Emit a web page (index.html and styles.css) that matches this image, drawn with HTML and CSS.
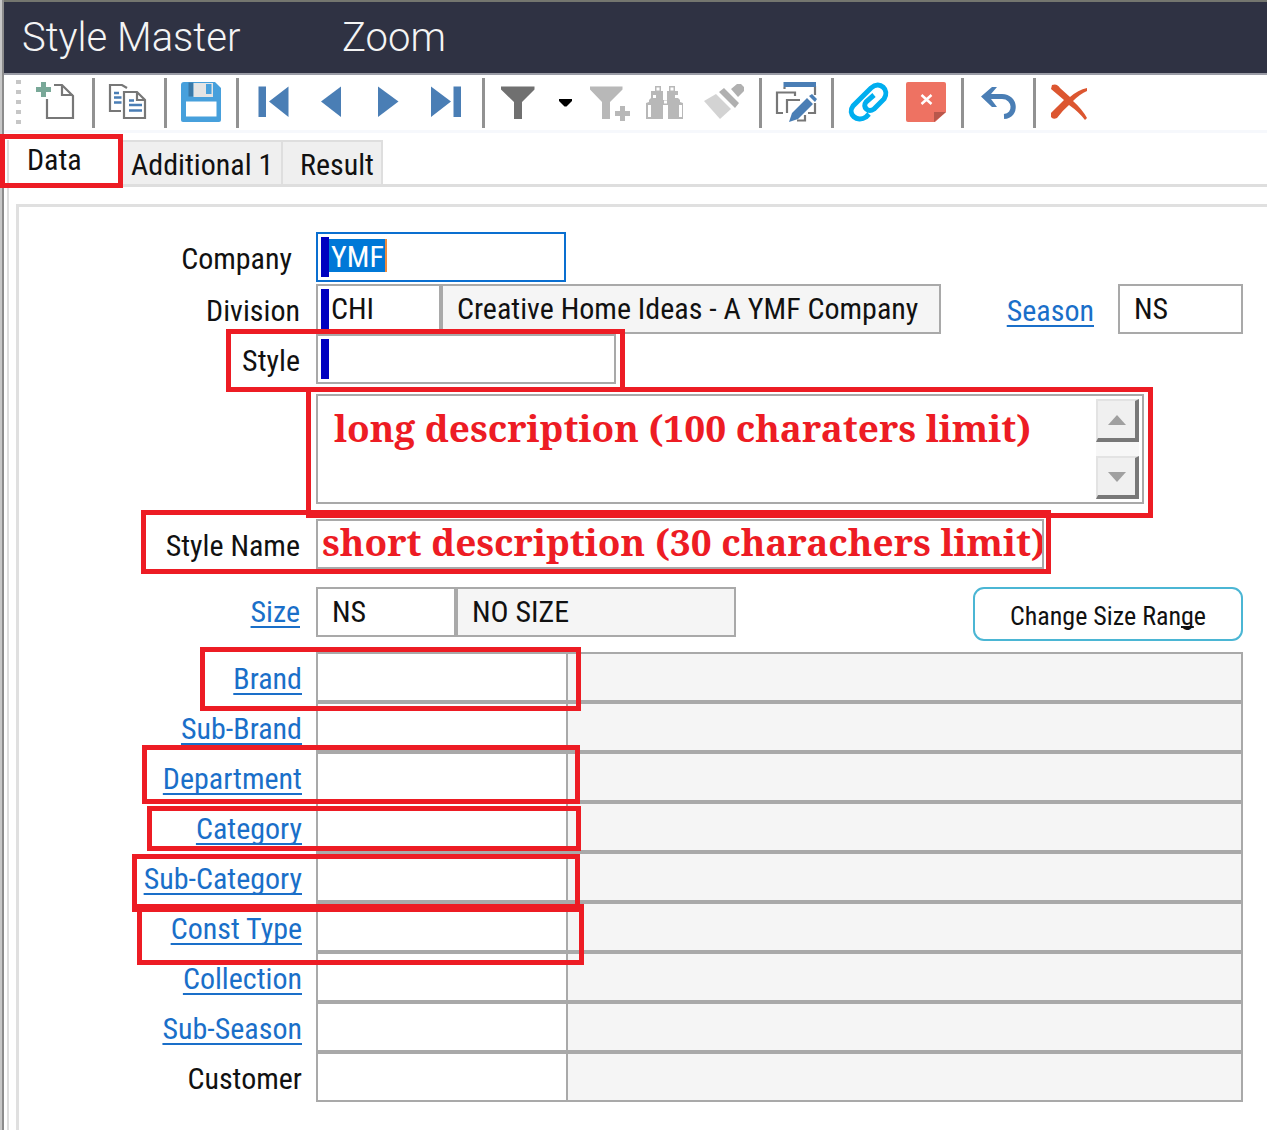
FILE: index.html
```html
<!DOCTYPE html>
<html lang="en">
<head>
<meta charset="utf-8">
<title>Style Master</title>
<link rel="stylesheet" href="styles.css">
</head>
<body>
<header class="titlebar">
  <h1 class="title">Style Master</h1>
  <span class="mode">Zoom</span>
</header>

<div class="toolbar" role="toolbar" aria-label="Record tools">
  <span class="grip"><i></i><i></i><i></i><i></i><i></i></span>
  <button class="tool" aria-label="New"><svg viewBox="0 0 40 40"><path d="M17 3H25L36 14V36H10V17M25 3V13H36" fill="none" stroke="#777" stroke-width="2.2"/><path d="M4 0h5v5h5v5H9v5H4v-5h-5V5h5z" fill="#79a898"/></svg></button>
  <span class="sep"></span>
  <button class="tool" aria-label="Copy"><svg viewBox="0 0 40 40"><path d="M12 29H1V3H13L18 6M15 10H28L36 18V36H15ZM28 10V18H36" fill="none" stroke="#777" stroke-width="2.2"/><path d="M5 11h5M5 15.500h7.500M5 20.500h7.500M20 18.500h5M20 23h13M20 28.500h13" stroke="#4a7eb5" stroke-width="2.4"/></svg></button>
  <span class="sep"></span>
  <button class="tool" aria-label="Save"><svg viewBox="0 0 40 40"><path d="M3 0H34L40 6V38Q40 40 38 40H2Q0 40 0 38V3Q0 0 3 0Z" fill="#47a0dc"/><path d="M7.500 .5h5v14h-5z" fill="#3878a8"/><path d="M12.500 1H32V15H12.500Z" fill="#e4e4e4"/><path d="M25 2h5.500v10H25z" fill="#47a0dc"/><path d="M5 19.500h30.500v15H5z" fill="#fff"/></svg></button>
  <span class="sep"></span>
  <button class="tool" aria-label="First"><svg viewBox="0 0 40 40" fill="#4a7eb5"><path d="M5.500 4.500h7.500V35H5.500zM35.500 4.500V35L16 19.500z"/></svg></button>
  <button class="tool" aria-label="Previous"><svg viewBox="0 0 40 40" fill="#4a7eb5"><path d="M30 4.500V35L10 19.500z"/></svg></button>
  <button class="tool" aria-label="Next"><svg viewBox="0 0 40 40" fill="#4a7eb5"><path d="M9 4.500V35L29.500 19.500z"/></svg></button>
  <button class="tool" aria-label="Last"><svg viewBox="0 0 40 40" fill="#4a7eb5"><path d="M4 4.500V35L24 19.500zM26.500 4.500H34V35h-7.500z"/></svg></button>
  <span class="sep"></span>
  <button class="tool" aria-label="Filter"><svg viewBox="0 0 40 40" fill="#707070"><path d="M2 4.500H35.500V7.500L23 20V37H15V20L2 7.500z"/></svg></button>
  <button class="tool tool-drop" aria-label="Filter options"><svg viewBox="0 0 14 40"><path d="M0 17H13V19L7.500 24.500H5.500L0 19z"/></svg></button>
  <button class="tool tool-plus" aria-label="Add filter"><svg viewBox="0 0 40 40" fill="#b8b8b8"><path d="M-1 4.500H31.500V7.500L19 20V37H11V20L-1 7.500zM29 24h5v5h5v5h-5v5h-5v-5h-5v-5h5z"/></svg></button>
  <button class="tool" aria-label="Find"><svg viewBox="0 0 40 40" fill="#b8b8b8"><path d="M9 4h6v5h2v9h4V9h2V4h6v5h3v7l2 2v2l3 1v16H22V23h-5v14H0V21l3-1v-2l2-2V9h4z"/><path d="M10.500 5.500h3v3h-3zM24.500 5.500h3v3h-3zM7 13h3v3H7zM29 13h3v3h-3zM18 18.500h3v3h-3zM2 23h3v12H2zM33 23h3v12h-3z" fill="#fff"/></svg></button>
  <button class="tool" aria-label="Format"><svg viewBox="0 0 40 40"><path d="M0 19L12 12L27 27L16 37Z" fill="#d3d3d3"/><path d="M15 10L20 6L35 21L31 26ZM27 7L33 2H37L40 5V9L34 15Z" fill="#b0b0b0"/></svg></button>
  <span class="sep"></span>
  <button class="tool" aria-label="Edit layout"><svg viewBox="0 0 40 40"><path d="M19 14V10.500H1V31H7M24 18H11V31M21 38.500H29V33M32 31H39V21M8.500 5V7M39 4V13" fill="none" stroke="#777" stroke-width="2.200"/><path d="M7.500 0H40V5H7.500zM13 40L16 31L31 16L37 22L22 37ZM33 14L36 12L41 17L39 20Z" fill="#4a7eb5"/></svg></button>
  <span class="sep"></span>
  <button class="tool" aria-label="Attachments"><svg viewBox="0 0 40 40"><path d="M21 32L18 35C9 41-1 32 5 24L23 6C32-2 42 8 36 17L26 27C20 31 14 25 18 20L26 13" fill="none" stroke="#00aeef" stroke-width="5"/></svg></button>
  <button class="tool" aria-label="Notes"><svg viewBox="0 0 40 40"><path d="M2 0H38Q40 0 40 2V30L29 40H2Q0 40 0 38V2Q0 0 2 0Z" fill="#ee7262"/><path d="M28 40V30H40Z" fill="#b8574b"/><path d="M15.500 13L25.500 22M25.500 13L15.500 22" stroke="#fff" stroke-width="2.500"/></svg></button>
  <span class="sep"></span>
  <button class="tool" aria-label="Undo"><svg viewBox="0 0 40 40"><path d="M8 14.500H24C38 14.500 39 34 26 34.500" fill="none" stroke="#4a7eb5" stroke-width="5.200"/><path d="M3 14.500L14 5H19L13 12V17L19 25H14Z" fill="#4a7eb5"/></svg></button>
  <span class="sep"></span>
  <button class="tool" aria-label="Delete"><svg viewBox="0 0 40 40" fill="#dc5630"><path d="M2 3Q7 1 10 6L20 15Q28 8 37 6V9Q30 12 23 19Q32 27 37 36L35 38Q29 30 19 23Q12 29 7 36Q3 38 1 35V31Q8 24 14 18Q7 12 1 7Z"/></svg></button>
</div>

<main class="workspace">
  <div class="tabs" role="tablist">
    <button class="tab tab-active" role="tab" aria-selected="true">Data</button>
    <button class="tab tab-additional" role="tab" aria-selected="false">Additional 1</button>
    <button class="tab tab-result" role="tab" aria-selected="false">Result</button>
    <span class="mark mark-data"></span>
  </div>

  <form class="panel">
    <div class="row row-company">
      <label class="label label-company" for="company">Company</label>
      <div class="field field-company required focused"><input class="selected" id="company" value="YMF"></div>
    </div>
    <div class="row row-division">
      <label class="label" for="division">Division</label>
      <div class="field field-division required"><input id="division" value="CHI"></div>
      <input class="box readonly division-name" aria-label="Division name" readonly value="Creative Home Ideas - A YMF Company">
      <a class="link season-link" id="season-label" href="#season">Season</a>
      <input class="box season" id="season" aria-labelledby="season-label" value="NS">
    </div>
    <div class="row row-style">
      <label class="label" for="style">Style</label>
      <div class="field field-style required"><input id="style"></div>
      <span class="mark mark-style"></span>
    </div>
    <div class="row row-long">
      <span class="label"></span>
      <div class="field field-long">
        <textarea class="note" aria-label="Long description">long description (100 charaters limit)</textarea>
        <div class="scroll">
          <button class="scroll-btn" type="button" aria-label="Scroll up"><svg viewBox="0 0 18 10"><path d="M9 0L18 10H0Z"/></svg></button>
          <button class="scroll-btn" type="button" aria-label="Scroll down"><svg viewBox="0 0 18 10"><path d="M0 0H18L9 10Z"/></svg></button>
        </div>
      </div>
      <span class="mark mark-long"></span>
    </div>
    <div class="row row-name">
      <label class="label" for="style-name">Style Name</label>
      <input class="box note style-name" id="style-name" value="short description (30 charachers limit)">
      <span class="mark mark-name"></span>
    </div>
    <div class="row row-size">
      <span class="label"><a class="link" id="size-label" href="#size">Size</a></span>
      <input class="box size-code" id="size" aria-labelledby="size-label" value="NS">
      <input class="box readonly size-name" aria-label="Size name" readonly value="NO SIZE">
      <button class="action" type="button">Change Size Ran<u>g</u>e</button>
    </div>

    <div class="lookups">
      <div class="row">
        <span class="label"><a class="link" id="brand-label" href="#brand">Brand</a></span>
        <input class="box code" id="brand" aria-labelledby="brand-label"><input class="box readonly desc" aria-label="Brand name" readonly>
        <span class="mark mark-brand"></span>
      </div>
      <div class="row">
        <span class="label"><a class="link" id="sub-brand-label" href="#sub-brand">Sub-Brand</a></span>
        <input class="box code" id="sub-brand" aria-labelledby="sub-brand-label"><input class="box readonly desc" aria-label="Sub-brand name" readonly>
      </div>
      <div class="row">
        <span class="label"><a class="link" id="department-label" href="#department">Department</a></span>
        <input class="box code" id="department" aria-labelledby="department-label"><input class="box readonly desc" aria-label="Department name" readonly>
        <span class="mark mark-department"></span>
      </div>
      <div class="row">
        <span class="label"><a class="link" id="category-label" href="#category">Category</a></span>
        <input class="box code" id="category" aria-labelledby="category-label"><input class="box readonly desc" aria-label="Category name" readonly>
        <span class="mark mark-category"></span>
      </div>
      <div class="row">
        <span class="label"><a class="link" id="sub-category-label" href="#sub-category">Sub-Category</a></span>
        <input class="box code" id="sub-category" aria-labelledby="sub-category-label"><input class="box readonly desc" aria-label="Sub-category name" readonly>
        <span class="mark mark-sub-category"></span>
      </div>
      <div class="row">
        <span class="label"><a class="link" id="const-type-label" href="#const-type">Const Type</a></span>
        <input class="box code" id="const-type" aria-labelledby="const-type-label"><input class="box readonly desc" aria-label="Const type name" readonly>
        <span class="mark mark-const-type"></span>
      </div>
      <div class="row">
        <span class="label"><a class="link" id="collection-label" href="#collection">Collection</a></span>
        <input class="box code" id="collection" aria-labelledby="collection-label"><input class="box readonly desc" aria-label="Collection name" readonly>
      </div>
      <div class="row">
        <span class="label"><a class="link" id="sub-season-label" href="#sub-season">Sub-Season</a></span>
        <input class="box code" id="sub-season" aria-labelledby="sub-season-label"><input class="box readonly desc" aria-label="Sub-season name" readonly>
      </div>
      <div class="row">
        <label class="label" for="customer">Customer</label>
        <input class="box code" id="customer"><input class="box readonly desc" aria-label="Customer name" readonly>
      </div>
    </div>
  </form>
</main>
</body>
</html>
```
FILE: styles.css
```css
* { box-sizing: border-box; }

body {
  margin: 0;
  min-height: 100vh;
  display: flex;
  flex-direction: column;
  padding-left: 4px;
  background: linear-gradient(90deg, #c8c8c8 2px, #8c8c8c 2px 4px, #fff 4px);
  color: #111;
  font: 30px/36px "Roboto Condensed", Roboto, "Liberation Sans", sans-serif;
}

button, input, textarea {
  margin: 0;
  padding: 0;
  border: 0;
  border-radius: 0;
  outline: 0;
  background: none;
  color: inherit;
  font: inherit;
}

/* Title bar */
.titlebar {
  display: flex;
  align-items: center;
  height: 75px;
  padding-left: 18px;
  border-top: 2px solid #74766f;
  border-bottom: 2px solid #9a9ca6;
  background: #2f3243;
  color: #f4f4f4;
  font-family: Roboto, "Liberation Sans", sans-serif;
  font-size: 40px;
  font-weight: 300;
}
.title { width: 320px; margin: 0; font: inherit; }

/* Toolbar */
.toolbar {
  display: flex;
  align-items: center;
  height: 58px;
  padding: 0 0 2px 10px;
  border-bottom: 3px solid #f6f8fc;
}
.grip { display: flex; flex-direction: column; gap: 6px; width: 14px; padding-left: 2px; }
.grip i { width: 5px; height: 4px; background: #c6c6c6; }
.tool { display: flex; justify-content: center; width: 58px; }
.tool svg { width: 40px; height: 40px; overflow: visible; }
.tool-drop { width: 36px; }
.tool-drop svg { width: 14px; }
.tool-plus { width: 53px; }
.sep { width: 3px; height: 50px; margin: 3px 5px 0 6px; background: #929292; }

/* Tabs */
.workspace {
  flex: 1;
  display: flex;
  flex-direction: column;
  margin: 7px 0 0 3px;
  border-left: 2px solid #dedede;
}
.tabs { position: relative; display: flex; height: 47px; border-bottom: 3px solid #dedede; }
.tab {
  padding: 4px 8px 0 9px;
  border: solid #dedede;
  border-width: 2px 2px 0 0;
  background: #efefef;
  text-align: left;
  white-space: nowrap;
}
.tab-active { width: 113px; padding: 0 18px 9px; margin-bottom: -3px; border-color: #fff; background: #fff; }
.tab-additional { width: 161px; }
.tab-result { width: 100px; padding-left: 17px; }

/* Form */
.panel {
  flex: 1;
  margin: 17px 0 0 7px;
  padding: 25px 24px 26px 0;
  border: solid #e0e0e0;
  border-width: 3px 0 0 3px;
}
.row { position: relative; display: flex; }
.row-division { margin-top: 2px; }
.row-long { margin-top: 10px; }
.row-name { margin-top: 15px; }
.row-size { margin-top: 18px; }
.lookups { margin-top: 11px; }

.label { flex: none; width: 297px; padding: 9px 16px 0 0; text-align: right; }
.label-company { padding-right: 24px; }
.row-size .label { padding-top: 7px; }
.lookups .label { padding-right: 14px; }
.link {
  color: #1a6fc9;
  text-decoration: underline 2px;
  text-underline-offset: 4px;
  text-decoration-skip-ink: none;
}

.box, .field { height: 50px; border: 2px solid #a9a9a9; background: #fff; }
.box { padding: 0 14px 2px; }
.readonly { background: #f5f5f5; }
.field { display: flex; }
.field input { flex: 1; min-width: 0; height: 44px; padding-left: 2px; }
.required::before { content: ""; width: 8px; margin: 3px 0 3px 3px; background: #0000c0; }
.focused { border-color: #0a6fd0; }
.selected {
  background: linear-gradient(90deg, #0078d7 56px, #ee8a3c 56px) 0 5px / 58px 33px no-repeat;
  color: #fff;
}

.field-company { width: 250px; }
.field-division { width: 125px; }
.division-name { width: 500px; }
.season-link { margin-left: auto; padding-top: 9px; }
.season { width: 125px; margin-left: 24px; }
.field-style { width: 300px; }
.field-long { width: 828px; height: 110px; padding: 3px; }
.field-long textarea { flex: 1; min-width: 0; padding: 7px 0 0 13px; overflow: hidden; resize: none; }
.size-code { width: 140px; }
.size-name { width: 280px; }
.code { width: 252px; }
.desc { flex: 1; min-width: 0; margin-left: -2px; }

.note {
  color: #ed1c24;
  font: bold 37px/44px "Noto Serif", Caladea, "Liberation Serif", serif;
}
.style-name { width: 728px; padding: 0 0 6px 4px; }

.scroll { display: flex; flex-direction: column; justify-content: space-between; background: #f7f7f7; }
.scroll-btn {
  display: flex;
  align-items: center;
  justify-content: center;
  width: 43px;
  height: 43px;
  border: solid;
  border-width: 2px 4px 4px 2px;
  border-color: #e3e3e3 #787878 #787878 #e3e3e3;
  background: #f0f0f0;
}
.scroll-btn svg { width: 18px; height: 10px; fill: #a0a0a0; }

.action {
  width: 270px;
  height: 54px;
  margin-left: auto;
  padding-top: 4px;
  border: 2px solid #4bb6d4;
  border-radius: 11px;
  background: #fff;
  font-size: 26px;
}
.action u { text-decoration-thickness: 2px; text-decoration-skip-ink: none; }

/* Red call-out frames laid over the form */
.mark { position: absolute; z-index: 1; border: 5px solid #ed1c24; pointer-events: none; }
.mark-data { left: -9px; top: -6px; width: 123px; height: 54px; }
.mark-style { left: 207px; top: -5px; width: 399px; height: 63px; }
.mark-long { left: 287px; top: -7px; width: 847px; height: 131px; }
.mark-name { left: 122px; top: -9px; width: 910px; height: 64px; }
.mark-brand { left: 181px; top: -5px; width: 381px; height: 64px; }
.mark-department { left: 123px; top: -7px; width: 438px; height: 59px; }
.mark-category { left: 128px; top: 4px; width: 434px; height: 45px; }
.mark-sub-category { left: 113px; top: 2px; width: 448px; height: 58px; }
.mark-const-type { left: 118px; top: 2px; width: 447px; height: 61px; }
```
